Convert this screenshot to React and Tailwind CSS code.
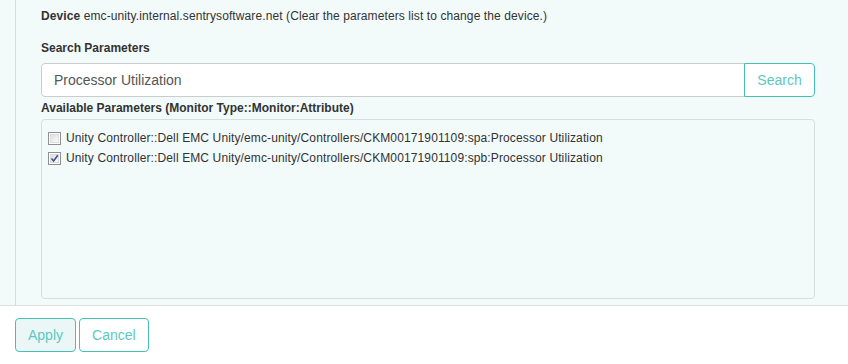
import React from "react";

function Box({ checked }) {
  return (
    <div className="w-[13px] h-[13px] shrink-0 border border-[#8f8f8f] bg-white p-px">
      <div className="w-full h-full border border-[#dcdcdc] bg-gradient-to-br from-[#dedede] to-[#fbfbfb] relative">
        {checked && (
          <svg viewBox="0 0 9 9" className="absolute -left-px -top-px w-[9px] h-[9px]">
            <path d="M1.5 4.5 L3.6 7 L7.8 1.2" fill="none" stroke="#3c4fa0" strokeWidth="1.6" />
          </svg>
        )}
      </div>
    </div>
  );
}

const rows = [
  { t: "Unity Controller::Dell EMC Unity/emc-unity/Controllers/CKM00171901109:spa:Processor Utilization", c: false },
  { t: "Unity Controller::Dell EMC Unity/emc-unity/Controllers/CKM00171901109:spb:Processor Utilization", c: true },
];

export default function App() {
  return (
    <div className="w-[848px] h-[364px] bg-white text-[#333] font-['Liberation_Sans',Arial,sans-serif] overflow-hidden">
      <div className="h-[306px] bg-[#f2fafa] border-b border-[#dedede]">
        <div className="ml-[15px] h-full border-l border-[#d6dbdb] pl-[25px] pr-[33px]">
          <div className="pt-[8px] text-[12px] leading-[17px] tracking-[0.1px]">
            <span className="font-bold">Device</span> emc-unity.internal.sentrysoftware.net (Clear the parameters list to change the device.)
          </div>
          <div className="mt-[15px] text-[12px] leading-[17px] font-bold">Search Parameters</div>
          <div className="mt-[6px] flex h-[34px]">
            <div className="flex-1 bg-white border border-[#cccccc] rounded-l-[4px] flex items-center pl-[12px] text-[14px] text-[#555]">
              Processor Utilization
            </div>
            <div className="w-[71px] border border-[#47c0b6] rounded-r-[4px] bg-white flex items-center justify-center text-[14px] text-[#5bc9bf] -ml-px">
              Search
            </div>
          </div>
          <div className="mt-[3px] text-[12px] leading-[17px] font-bold">Available Parameters (Monitor Type::Monitor:Attribute)</div>
          <div className="mt-[2px] h-[180px] border border-[#d9dddd] rounded-[4px] pl-[6px] pt-[8px]">
            {rows.map((r, i) => (
              <div key={i} className="flex items-center h-[20px] gap-[6px] text-[12px] tracking-[0.12px]">
                <Box checked={r.c} />
                <span className="ml-[-1px]">{r.t}</span>
              </div>
            ))}
          </div>
        </div>
      </div>
      <div className="pl-[15px] pt-[12px] flex gap-[3px]">
        <div className="h-[34px] px-[12px] flex items-center border border-[#47c0b6] rounded-[4px] bg-[#ebf7f7] text-[14px] text-[#5bc9bf]">Apply</div>
        <div className="h-[34px] px-[12px] flex items-center border border-[#47c0b6] rounded-[4px] bg-white text-[14px] text-[#5bc9bf]">Cancel</div>
      </div>
    </div>
  );
}
